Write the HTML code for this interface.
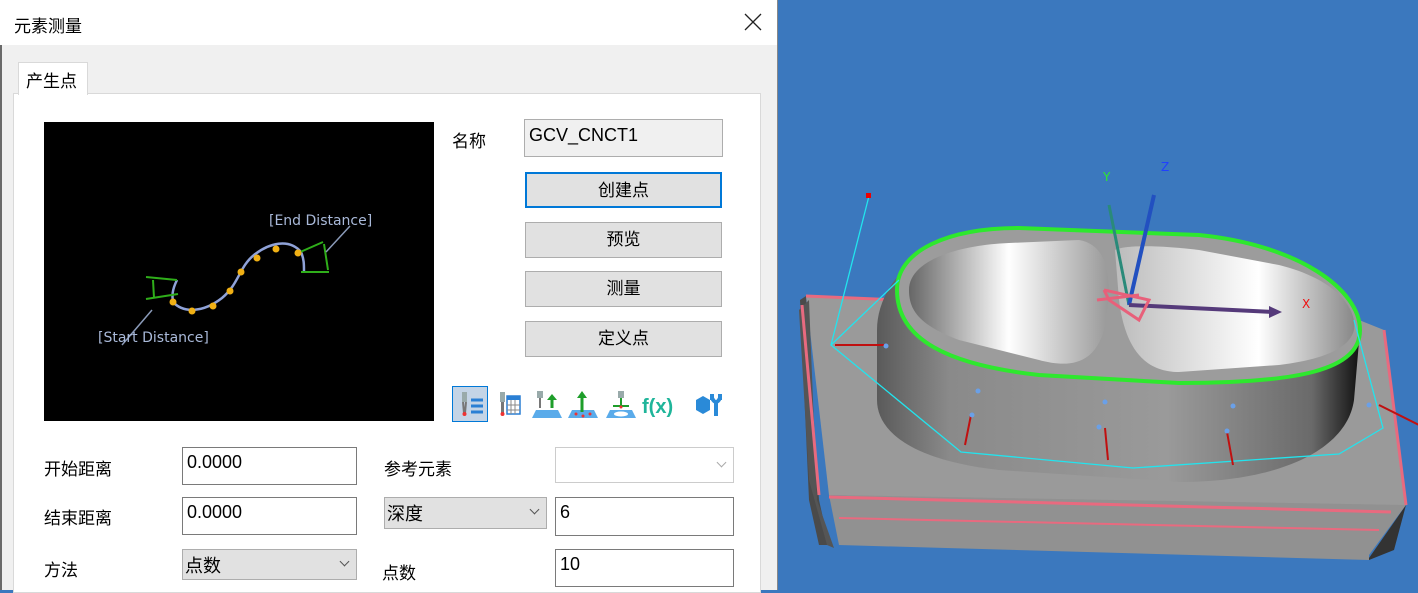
<!DOCTYPE html>
<html><head><meta charset="utf-8"><style>
*{margin:0;padding:0;box-sizing:border-box}
body{width:1418px;height:590px;overflow:hidden;position:relative;background:#3b78be;font-family:"Liberation Sans","Noto Sans CJK SC",sans-serif;font-size:17px;color:#000}
.a{position:absolute}
.dlg{left:0;top:0;width:778px;height:590px;background:#f0f0f0;border-left:2px solid #6a6a6a;border-right:1px solid #888}
.title{left:0;top:0;width:777px;height:45px;background:#fff}
.inp{position:absolute;background:#fff;border:1px solid #7a7a7a;padding:4px 4px;font-size:18px}
.btn{position:absolute;background:#e1e1e1;border:1px solid #adadad;text-align:center;font-size:17px}
.sel{position:absolute;background:#e1e1e1;border:1px solid #adadad;font-size:18px;padding:2px 2px}
.chev{position:absolute;right:8px;top:8px;width:7px;height:7px;border-right:1px solid #555;border-bottom:1px solid #555;transform:rotate(45deg)}
</style></head><body>
<div class="a dlg"></div>
<div class="a title"></div>
<div class="a" style="left:14px;top:12px;font-size:17px">元素测量</div>
<svg class="a" style="left:744px;top:13px" width="18" height="18"><path d="M1 1L17 17M17 1L1 17" stroke="#222" stroke-width="1.3"/></svg>
<div class="a" style="left:13px;top:93px;width:748px;height:500px;background:#fff;border:1px solid #d9d9d9"></div>
<div class="a" style="left:18px;top:62px;width:70px;height:33px;background:#fff;border:1px solid #d9d9d9;border-bottom:none;font-size:17px;padding:4px 0 0 7px">产生点</div>
<div class="a" style="left:44px;top:122px;width:390px;height:299px;background:#000"></div>
<svg class="a" style="left:44px;top:122px" width="390" height="299">
<g fill="none" stroke="#8fa2d8" stroke-width="2.5"><path d="M129 180 C140 192 160 190 178 176 C195 162 195 145 210 133 C225 121 245 116 257 130 C260 137 260 142 260 150"/><path d="M133 158 C128 168 128 174 129 180"/></g>
<g stroke="#2fae1a" stroke-width="2" fill="none"><path d="M102 177 L134 172 M102 155 L133 158 M109 158 L110 176 M257 150 L285 150 M254 131 L279 120 M280 122 L284 148"/></g>
<g stroke="#8a9ab8" stroke-width="1.5"><path d="M78 223 L108 188 M306 104 L282 130"/></g>
<g fill="#f0b015"><circle cx="129" cy="180" r="3.5"/><circle cx="148" cy="189" r="3.5"/><circle cx="169" cy="184" r="3.5"/><circle cx="186" cy="169" r="3.5"/><circle cx="197" cy="150" r="3.5"/><circle cx="213" cy="136" r="3.5"/><circle cx="232" cy="127" r="3.5"/><circle cx="254" cy="131" r="3.5"/></g>
<text x="225" y="103" fill="#a9b9d9" font-family="DejaVu Sans" font-size="14">[End Distance]</text>
<text x="54" y="220" fill="#a9b9d9" font-family="DejaVu Sans" font-size="14">[Start Distance]</text>
</svg>
<div class="a" style="left:452px;top:127px">名称</div>
<div class="a" style="left:524px;top:119px;width:199px;height:38px;background:#f0f0f0;border:1px solid #adadad;padding:5px 4px;font-size:18px">GCV_CNCT1</div>
<div class="btn" style="left:525px;top:172px;width:197px;height:36px;line-height:34px;border:2px solid #0078d7">创建点</div>
<div class="btn" style="left:525px;top:222px;width:197px;height:36px;line-height:34px">预览</div>
<div class="btn" style="left:525px;top:271px;width:197px;height:36px;line-height:34px">测量</div>
<div class="btn" style="left:525px;top:321px;width:197px;height:36px;line-height:34px">定义点</div>
<div class="a" style="left:452px;top:386px;width:36px;height:36px;background:#c4d4e6;border:1px solid #0078d7"></div>
<svg class="a" style="left:452px;top:386px" width="280" height="36">
<g><rect x="10" y="6" width="5" height="10" fill="#9aa"/><path d="M11 16 L12 27 M14 16 L13 27" stroke="#777" stroke-width="2"/><circle cx="12.5" cy="28" r="2" fill="#e33"/><path d="M19 14h12M19 20h12M19 26h12" stroke="#2a7fd4" stroke-width="3"/></g>
<g transform="translate(40,0)"><rect x="8" y="6" width="5" height="10" fill="#9aa"/><path d="M10.5 16v11" stroke="#777" stroke-width="3"/><circle cx="10.5" cy="28" r="2" fill="#e33"/><rect x="15" y="10" width="13" height="18" fill="#fff" stroke="#2a7fd4" stroke-width="1.5"/><rect x="15" y="10" width="13" height="4" fill="#2a7fd4"/><path d="M19 14v14M23 14v14M15 19h13M15 24h13" stroke="#888" stroke-width="1"/></g>
<g transform="translate(78,0)"><path d="M2 32 L6 24 H28 L32 32Z" fill="#5aabea"/><rect x="7" y="5" width="6" height="7" fill="#9aa"/><path d="M10 12v10" stroke="#777" stroke-width="2"/><path d="M22 22V12" stroke="#1e9e2a" stroke-width="3"/><path d="M17 14 L22 8 L27 14Z" fill="#1e9e2a"/></g>
<g transform="translate(114,0)"><path d="M2 32 L6 24 H28 L32 32Z" fill="#5aabea"/><path d="M16 26V10" stroke="#1e9e2a" stroke-width="3"/><path d="M11 12 L16 5 L21 12Z" fill="#1e9e2a"/><circle cx="10" cy="28" r="1.5" fill="#e33"/><circle cx="17" cy="30" r="1.5" fill="#e33"/><circle cx="24" cy="28" r="1.5" fill="#e33"/></g>
<g transform="translate(152,0)"><path d="M2 32 L6 24 H28 L32 32Z" fill="#5aabea"/><ellipse cx="17" cy="28" rx="7" ry="2.5" fill="#fff"/><rect x="14" y="5" width="6" height="7" fill="#9aa"/><path d="M17 12v10M9 20h16" stroke="#1e9e2a" stroke-width="2"/><circle cx="17" cy="21" r="1.5" fill="#e33"/></g>
<text x="190" y="27" fill="#1fb59a" font-size="20" font-weight="bold" font-family="Liberation Sans">f(x)</text>
<g transform="translate(240,0)"><path d="M4 14 L11 10 L18 14 V24 L11 28 L4 24Z" fill="#2a8ad8"/><path d="M20 8 V14 M28 8 V14 M20 12 Q24 20 28 12 M24 16 V30" stroke="#2a8ad8" stroke-width="4" fill="none"/></g>
</svg>
<div class="a" style="left:44px;top:455px">开始距离</div>
<div class="inp" style="left:182px;top:447px;width:175px;height:38px">0.0000</div>
<div class="a" style="left:44px;top:504px">结束距离</div>
<div class="inp" style="left:182px;top:497px;width:175px;height:38px">0.0000</div>
<div class="a" style="left:44px;top:556px">方法</div>
<div class="sel" style="left:182px;top:549px;width:175px;height:31px">点数<span class="chev"></span></div>
<div class="a" style="left:384px;top:455px">参考元素</div>
<div class="a" style="left:555px;top:447px;width:179px;height:36px;border:1px solid #ccc;background:#fff"><span class="chev" style="border-color:#aaa;top:11px"></span></div>
<div class="sel" style="left:384px;top:497px;width:163px;height:32px">深度<span class="chev"></span></div>
<div class="inp" style="left:555px;top:497px;width:179px;height:39px">6</div>
<div class="a" style="left:382px;top:559px">点数</div>
<div class="inp" style="left:555px;top:549px;width:179px;height:38px">10</div>

<svg class="a" style="left:779px;top:0" width="639" height="590">
<defs>
<linearGradient id="side" x1="0" x2="1"><stop offset="0" stop-color="#5a5a5a"/><stop offset=".15" stop-color="#8a8a8a"/><stop offset=".6" stop-color="#9a9a9a"/><stop offset=".9" stop-color="#6a6a6a"/><stop offset="1" stop-color="#111"/></linearGradient>
<linearGradient id="cav" x1="0" x2="1"><stop offset="0" stop-color="#666"/><stop offset=".5" stop-color="#fff"/><stop offset="1" stop-color="#999"/></linearGradient>
<linearGradient id="cav2" x1="0" x2="1"><stop offset="0" stop-color="#bbb"/><stop offset=".6" stop-color="#fff"/><stop offset="1" stop-color="#888"/></linearGradient>
</defs>
<path d="M21 300 L27 296 L40 500 L50 545 L40 545 L30 500Z" fill="#4a4a4a"/>
<path d="M27 296 L580 320 L605 330 L627 505 L600 510 L50 495Z" fill="#9a9a9a"/>
<path d="M50 495 L627 505 L590 555 L590 560 L60 545Z" fill="#919191"/>
<path d="M590 558 L627 505 L615 550 L590 560Z" fill="#333"/>
<path d="M30 300 L38 500 L55 548 L48 545 L30 480 L20 310Z" fill="#555"/>
<path d="M27 296 L575 320" stroke="#e86a7f" stroke-width="3"/>
<path d="M23 305 L40 495" stroke="#e86a7f" stroke-width="3"/>
<path d="M605 330 L627 505" stroke="#e86a7f" stroke-width="3"/>
<path d="M50 497 L612 512" stroke="#e86a7f" stroke-width="3"/>
<path d="M60 518 L600 530" stroke="#e86a7f" stroke-width="2"/>
<path d="M98 330 C98 280 150 228 240 228 L420 235 C520 245 581 290 581 330 L575 400 C568 450 500 482 400 482 L220 470 C130 460 98 430 98 400Z" fill="url(#side)"/>
<path d="M118 290 C118 250 170 228 240 228 L420 235 C520 245 581 290 581 330 C581 370 520 383 400 383 L260 375 C170 365 118 340 118 290Z" fill="#9c9c9c" stroke="#2ee82e" stroke-width="4"/>
<path d="M130 290 C130 260 180 245 230 243 L300 240 C330 245 335 280 325 330 C315 365 290 368 260 360 L180 340 C140 325 130 310 130 290Z" fill="url(#cav)"/>
<path d="M336 250 C345 245 380 245 420 250 L500 265 C560 280 578 310 575 330 C570 350 540 360 500 365 L400 372 C360 372 345 340 340 300 Z" fill="url(#cav2)"/>
<g stroke="#22e4ee" stroke-width="1.3" fill="none"><path d="M90 196 L52 345 L182 452 L354 468 L560 454 L604 428 L575 320 M52 345 L120 280"/></g>
<rect x="87" y="193" width="5" height="5" fill="#e00"/>
<path d="M350 305 L330 205" stroke="#2a8a7a" stroke-width="3"/>
<path d="M350 305 L375 195" stroke="#2250c0" stroke-width="4"/>
<path d="M350 305 L495 312" stroke="#553a7a" stroke-width="4"/>
<path d="M490 306 L503 312 L490 318Z" fill="#553a7a"/>
<path d="M325 290 L370 300 L360 320 L330 300 L325 290 M318 300 L360 295" stroke="#e8607a" stroke-width="3" fill="none"/>
<text x="324" y="181" fill="#2ee82e" font-size="12" font-family="DejaVu Sans">Y</text>
<text x="382" y="171" fill="#2040ff" font-size="12" font-family="DejaVu Sans">Z</text>
<text x="523" y="308" fill="#f01010" font-size="12" font-family="DejaVu Sans">X</text>
<g stroke="#c01010" stroke-width="2"><path d="M56 345 H105 M192 415 L186 445 M326 428 L329 460 M448 432 L454 465 M600 405 L640 425"/></g>
<g fill="#6aa0e8"><circle cx="107" cy="346" r="2.5"/><circle cx="193" cy="415" r="2.5"/><circle cx="320" cy="427" r="2.5"/><circle cx="448" cy="431" r="2.5"/><circle cx="199" cy="391" r="2.5"/><circle cx="326" cy="402" r="2.5"/><circle cx="454" cy="406" r="2.5"/><circle cx="590" cy="405" r="2.5"/></g>
</svg>
</body></html>
